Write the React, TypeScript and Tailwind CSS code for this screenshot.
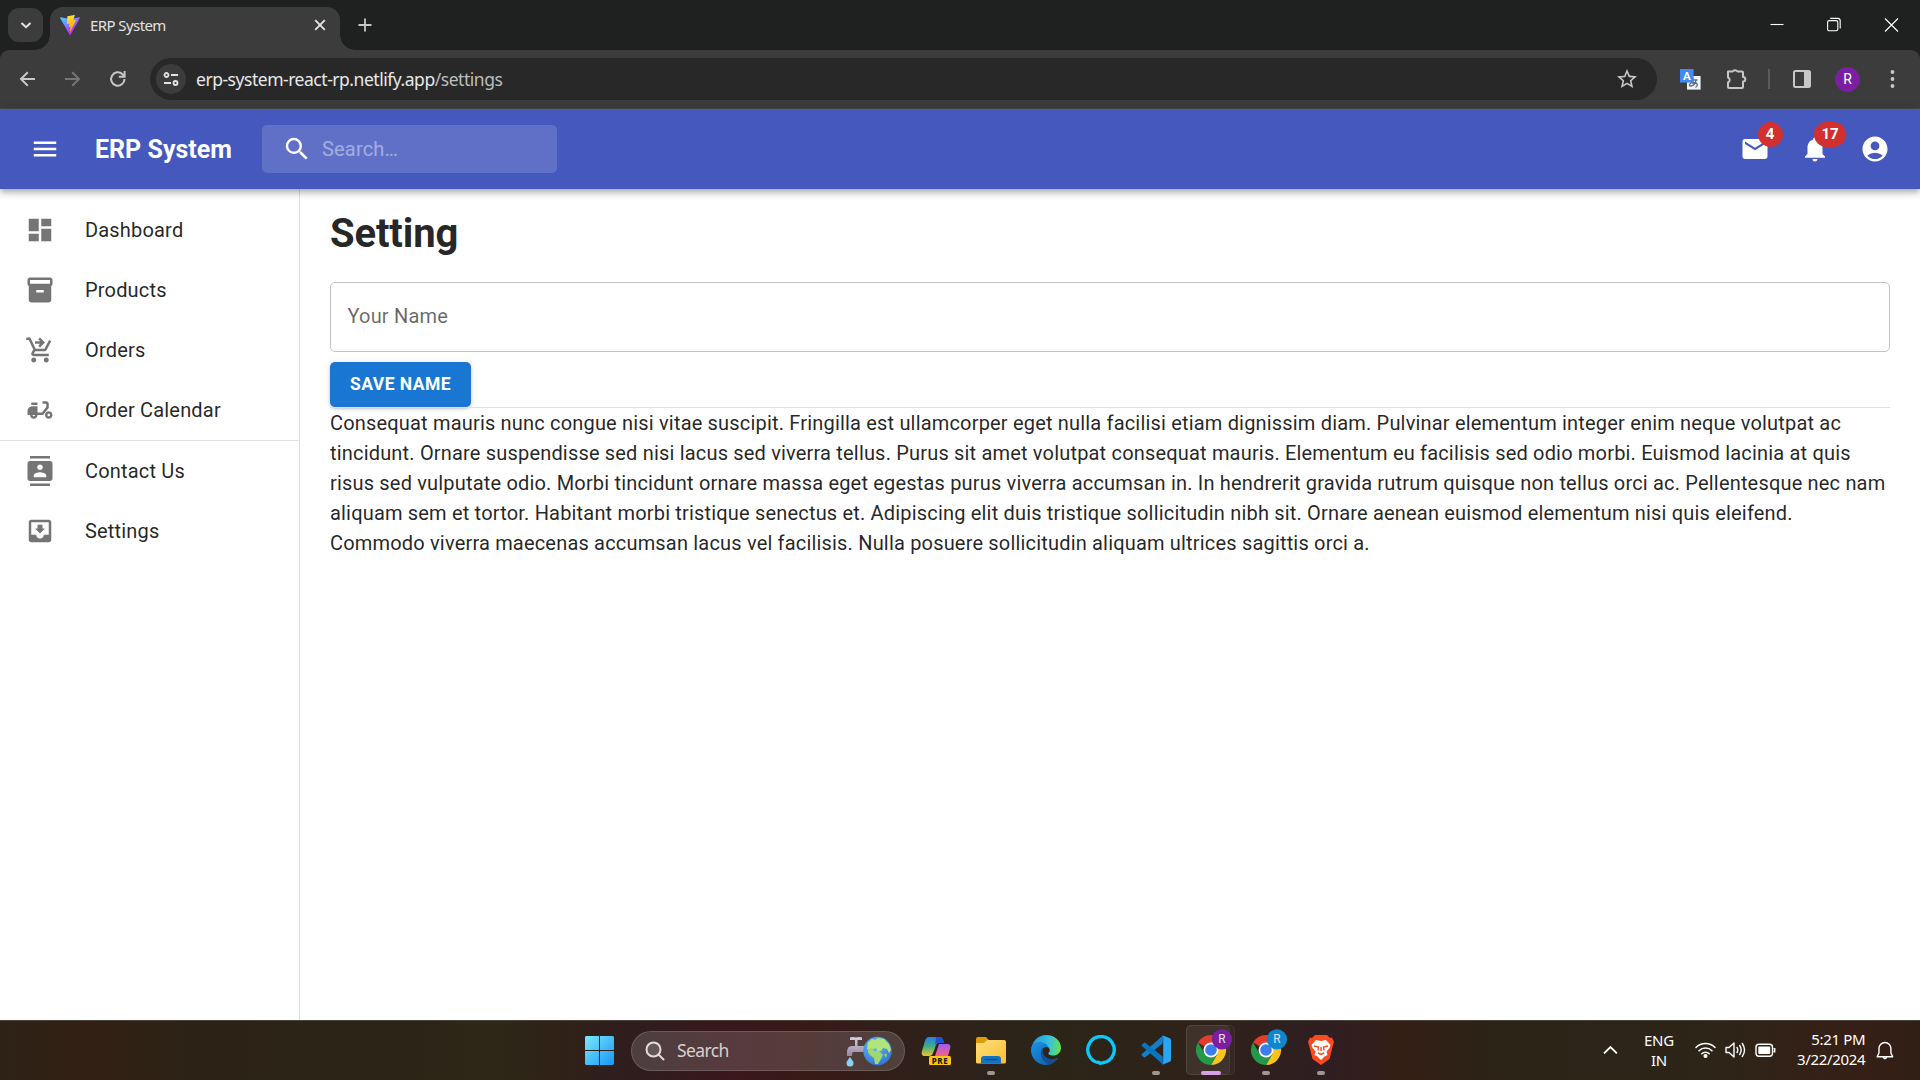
import React from "react";
import {
  MdMenu, MdSearch, MdMail, MdNotifications, MdAccountCircle, MdDashboard, MdInventory2,
  MdShoppingCartCheckout, MdDeliveryDining, MdContacts, MdMoveToInbox, MdStarBorder,
} from "react-icons/md";
import type { IconType } from "react-icons";

const SEGOE = "font-['Noto_Sans','Open_Sans',sans-serif]";

function ViteLogo() {
  return (
    <svg width="20" height="20" viewBox="0 0 256 257">
      <defs>
        <linearGradient id="va" x1="0" y1="0.08" x2="0.57" y2="0.8"><stop offset="0" stopColor="#41D1FF" /><stop offset="1" stopColor="#BD34FE" /></linearGradient>
        <linearGradient id="vb" x1="0.43" y1="0.02" x2="0.5" y2="0.9"><stop offset="0" stopColor="#FFEA83" /><stop offset="0.08" stopColor="#FFDD35" /><stop offset="1" stopColor="#FFA800" /></linearGradient>
      </defs>
      <path fill="url(#va)" d="M255.153 37.938L134.897 252.976c-2.483 4.44-8.862 4.466-11.382.048L.875 37.958c-2.746-4.814 1.371-10.646 6.827-9.67l120.385 21.517a6.537 6.537 0 0 0 2.322-.004l117.867-21.483c5.438-.991 9.574 4.796 6.877 9.62Z" />
      <path fill="url(#vb)" d="M185.432.063L96.44 17.501a3.268 3.268 0 0 0-2.634 3.014l-5.474 92.456a3.268 3.268 0 0 0 3.997 3.378l24.777-5.718c2.318-.535 4.413 1.507 3.936 3.838l-7.361 36.047c-.495 2.426 1.782 4.5 4.151 3.78l15.304-4.649c2.372-.72 4.652 1.36 4.15 3.788l-11.698 56.621c-.732 3.542 3.979 5.473 5.943 2.437l1.313-2.028l72.516-144.72c1.215-2.423-.88-5.186-3.54-4.672l-25.505 4.922c-2.396.462-4.435-1.77-3.759-4.114l16.646-57.705c.677-2.35-1.37-4.583-3.769-4.113Z" />
    </svg>
  );
}

function TabStrip() {
  return (
    <div className="flex h-[50px] bg-[#1f2120]">
      <div className="ml-2 mt-2 flex h-[34px] w-[35px] items-center justify-center rounded-[11px] bg-[#3c3c3c]">
        <svg width="12" height="12" viewBox="0 0 12 12" fill="none" stroke="#e3e3e3" strokeWidth="2"><path d="M1.500 4l4.500 4.200L10.500 4" /></svg>
      </div>
      <div className="flex w-[7px] items-end">
        <div className="-ml-[8px] h-[15px] w-[15px] shrink-0 bg-[radial-gradient(circle_at_0_0,transparent_14.5px,#3c3c3c_15px)]" />
      </div>
      <div className="mt-[7px] flex h-[43px] w-[290px] items-center rounded-t-[13px] bg-[#3c3c3c] pb-[7px] pl-[10px] pr-[13px]">
        <ViteLogo />
        <span className={`${SEGOE} ml-[10px] flex-1 text-[15px] tracking-[-0.58px] text-[#e3e3e3]`}>ERP System</span>
        <svg width="14" height="14" viewBox="0 0 14 14" stroke="#e3e3e3" strokeWidth="1.9"><path d="M2.200 2.200l9.600 9.600M11.800 2.200l-9.600 9.600" /></svg>
      </div>
      <div className="flex items-end">
        <div className="h-[15px] w-[15px] bg-[radial-gradient(circle_at_100%_0,transparent_14.5px,#3c3c3c_15px)]" />
      </div>
      <svg className="ml-[3px] mt-[18px]" width="14" height="14" viewBox="0 0 14 14" stroke="#c7c7c7" strokeWidth="1.8"><path d="M7 .5v13M.5 7h13" /></svg>
      <div className="ml-auto mt-[17px] flex gap-[43px] pr-[21px]">
        <svg width="15" height="15" viewBox="0 0 15 15" stroke="#fff" strokeWidth="1.1"><path d="M1.500 7.500h13" /></svg>
        <svg width="14" height="15" viewBox="0 0 14 15" fill="none" stroke="#fff" strokeWidth="1.1"><rect x=".6" y="3.6" width="10.2" height="10.2" rx="1.6" /><path d="M3.2 1.4h7.6a2.4 2.4 0 0 1 2.4 2.4v7.6" /></svg>
        <svg width="15" height="15" viewBox="0 0 15 15" stroke="#fff" strokeWidth="1.1"><path d="M1 1.500l13 13M14 1.500l-13 13" /></svg>
      </div>
    </div>
  );
}

function TranslateIcon() {
  return (
    <svg width="21" height="21" viewBox="0 0 21 21">
      <rect x="7" y="7" width="13.6" height="13.6" fill="#f4f4f4" />
      <path d="M9.5 11h8M13 9v6M16 11c-.5 4-3 6-5.500 6-2 0-1-3.500 2.500-3.500 5 0 5.500 3 2.500 5" fill="none" stroke="#55707c" strokeWidth="1.3" />
      <rect x="0" y="0" width="13.600" height="13.600" fill="#4688f1" />
      <text x="6.800" y="11" textAnchor="middle" fontSize="11.500" fontWeight="700" fill="#fff" className="font-['Roboto',sans-serif]">A</text>
    </svg>
  );
}

function AddressBar() {
  return (
    <div className="h-[59px] bg-[#1f2120]">
      <div className="flex h-[59px] items-center rounded-t-[9px] border-b border-[#4a4a4a] bg-[#3c3c3c]">
        <svg className="ml-[19px]" width="17" height="16" viewBox="0 0 17 16" fill="none" stroke="#c7c7c7" strokeWidth="2"><path d="M16 8H2M8.800 1.200L2 8l6.800 6.800" /></svg>
        <svg className="ml-[28px]" width="17" height="16" viewBox="0 0 17 16" fill="none" stroke="#757575" strokeWidth="2"><path d="M1 8h14M8.200 1.200L15 8l-6.800 6.800" /></svg>
        <svg className="ml-[28px]" width="18" height="18" viewBox="0 0 18 18" fill="none" stroke="#c7c7c7" strokeWidth="2"><path d="M15.500 9a6.700 6.700 0 1 1-2-4.800L15 6" /><path d="M15.600 1v5.800H9.800" /></svg>
        <div className="ml-[23px] flex h-[42px] w-[1507px] items-center rounded-full bg-[#282828] pl-[6px] pr-[18px]">
          <div className="flex h-[30px] w-[30px] items-center justify-center rounded-full bg-[#3c3c3c]">
            <svg width="16" height="16" viewBox="0 0 16 16" fill="none" stroke="#e3e3e3" strokeWidth="1.800"><circle cx="3.500" cy="4" r="2" /><path d="M8 4h7M1 12h7" /><circle cx="12.500" cy="12" r="2" /></svg>
          </div>
          <span className={`${SEGOE} ml-[10px] flex-1 whitespace-nowrap text-[17.500px] tracking-[-0.47px] text-[#e8e8e8]`}>
            erp-system-react-rp.netlify.app<span className="text-[#bdbdbd]">/settings</span>
          </span>
          <MdStarBorder className="h-[24px] w-[24px] text-[#c7c7c7]" />
        </div>
        <div className="ml-[23px]"><TranslateIcon /></div>
        <svg className="ml-[24px]" width="22" height="22" viewBox="0 0 22 22"><path d="M3 3.500h4.500a3 3 0 0 1 5 0H17q1 0 1 1v4.500a2.200 2.200 0 0 1 0 4.600V19q0 1-1 1H4q-1 0-1-1v-4.500a2.700 2.700 0 0 0 0-5z" fill="none" stroke="#c7c7c7" strokeWidth="2" strokeLinejoin="round" /></svg>
        <div className="ml-[21px] h-[20px] w-[2px] bg-[#5c5c5c]" />
        <svg className="ml-[23px]" width="18" height="18" viewBox="0 0 18 18"><rect x="1" y="1" width="16" height="16" rx="1.500" fill="none" stroke="#c7c7c7" strokeWidth="2" /><path d="M11 1h6v16h-6z" fill="#c7c7c7" /></svg>
        <div className="ml-[24px] flex h-[25px] w-[25px] items-center justify-center rounded-full bg-[#7b1fa2] font-['Roboto',sans-serif] text-[14px] text-white">R</div>
        <svg className="ml-[30px]" width="5" height="18" viewBox="0 0 5 18" fill="#c7c7c7"><circle cx="2.500" cy="2" r="1.900" /><circle cx="2.500" cy="9" r="1.900" /><circle cx="2.500" cy="16" r="1.900" /></svg>
      </div>
    </div>
  );
}

function AppBar() {
  return (
    <header className="relative z-10 flex h-[80px] shrink-0 items-center bg-[#4558be] pl-[30px] pr-[30px] text-white shadow-[0_2px_5px_-1px_rgba(0,0,0,0.2),0_5px_6px_0_rgba(0,0,0,0.14),0_1px_12px_0_rgba(0,0,0,0.12)]">
      <MdMenu className="h-[30px] w-[30px]" />
      <h1 className="ml-[35px] w-[137px] whitespace-nowrap pt-[2px] text-[25px] font-bold tracking-[0.02px]">ERP System</h1>
      <div className="ml-[30px] flex h-[48px] w-[295px] items-center rounded-[5px] bg-white/15 pl-[20px]">
        <MdSearch className="h-[30px] w-[30px]" />
        <span className="ml-[10px] text-[20px] tracking-[0.18px] text-white/42">Search…</span>
      </div>
      <div className="ml-auto flex gap-[30px]">
        <div className="relative">
          <MdMail className="h-[30px] w-[30px]" />
          <span className="absolute left-[17.500px] top-[-12px] flex h-[25px] w-[25px] items-center justify-center rounded-full bg-[#d32f2f] text-[15px] font-bold">4</span>
        </div>
        <div className="relative">
          <MdNotifications className="h-[30px] w-[30px]" />
          <span className="absolute left-[14px] top-[-12px] flex h-[25px] w-[32px] items-center justify-center rounded-full bg-[#d32f2f] text-[15px] font-bold">17</span>
        </div>
        <MdAccountCircle className="h-[30px] w-[30px]" />
      </div>
    </header>
  );
}

function NavItem({ icon: Icon, label }: { icon: IconType; label: string }) {
  return (
    <div className="flex h-[60px] items-center pl-[25px]">
      <Icon className="h-[30px] w-[30px] text-[#757575]" />
      <span className="ml-[30px] text-[20px] leading-[30px] tracking-[0.18px] text-black/87">{label}</span>
    </div>
  );
}

function Sidebar() {
  return (
    <nav className="w-[300px] shrink-0 border-r border-[#e0e0e0] pt-[11px]">
      <NavItem icon={MdDashboard} label="Dashboard" />
      <NavItem icon={MdInventory2} label="Products" />
      <NavItem icon={MdShoppingCartCheckout} label="Orders" />
      <NavItem icon={MdDeliveryDining} label="Order Calendar" />
      <div className="h-px bg-[#e0e0e0]" />
      <NavItem icon={MdContacts} label="Contact Us" />
      <NavItem icon={MdMoveToInbox} label="Settings" />
    </nav>
  );
}

const LINES = [
  "Consequat mauris nunc congue nisi vitae suscipit. Fringilla est ullamcorper eget nulla facilisi etiam dignissim diam. Pulvinar elementum integer enim neque volutpat ac",
  "tincidunt. Ornare suspendisse sed nisi lacus sed viverra tellus. Purus sit amet volutpat consequat mauris. Elementum eu facilisis sed odio morbi. Euismod lacinia at quis",
  "risus sed vulputate odio. Morbi tincidunt ornare massa eget egestas purus viverra accumsan in. In hendrerit gravida rutrum quisque non tellus orci ac. Pellentesque nec nam",
  "aliquam sem et tortor. Habitant morbi tristique senectus et. Adipiscing elit duis tristique sollicitudin nibh sit. Ornare aenean euismod elementum nisi quis eleifend.",
  "Commodo viverra maecenas accumsan lacus vel facilisis. Nulla posuere sollicitudin aliquam ultrices sagittis orci a.",
];

function SettingsPage() {
  return (
    <main className="flex-1 pl-[30px] pr-[30px] text-black/87">
      <h2 className="mt-[15px] h-[60px] text-[40px] font-bold leading-[60px] tracking-[-0.15px]">Setting</h2>
      <div className="mt-[18px] flex h-[70px] items-center rounded-[5px] border border-[#c4c4c4] pb-[2px] pl-[16.500px] text-[20px] tracking-[0.18px] text-black/60">Your Name</div>
      <button className="mt-[10px] block h-[45px] w-[141px] rounded-[5px] bg-[#1976d2] text-[17.500px] font-bold tracking-[0.44px] text-white shadow-[0_4px_1px_-3px_rgba(0,0,0,0.2),0_2px_3px_0_rgba(0,0,0,0.14),0_1px_6px_0_rgba(0,0,0,0.12)]">SAVE NAME</button>
      <div className="h-px bg-[#e0e0e0]" />
      <p className="text-[20px] leading-[30px] tracking-[0.18px]">
        {LINES.map((l) => <span key={l} className="block whitespace-nowrap">{l}</span>)}
      </p>
    </main>
  );
}

function Slot({ children, dot, active }: { children: React.ReactNode; dot?: boolean; active?: boolean }) {
  return (
    <div className="relative flex h-[60px] w-[55px] items-center justify-center">
      {active && <div className="absolute left-[3px] top-[4px] h-[50px] w-[49px] rounded-[5px] border border-white/5 bg-white/[0.03]" />}
      {active && <div className="absolute left-[3px] top-[4px] h-[50px] w-[44px] rounded-[5px] border border-white/5 bg-white/[0.05]" />}
      <div className="relative -top-px">{children}</div>
      {dot && <div className="absolute bottom-[6px] left-[23.500px] h-[4px] w-[8px] rounded-full bg-[#9f9892]" />}
      {active && <div className="absolute bottom-[6px] left-[17.500px] h-[4px] w-[20px] rounded-full bg-[#d8a0e4]" />}
    </div>
  );
}

function Chrome({ badge }: { badge: string }) {
  return (
    <svg className="block overflow-visible" width="30" height="30" viewBox="0 0 48 48">
      <path d="M24 24L3.200 12A24 24 0 0 1 44.800 12H24z" fill="#e33b2e" />
      <path d="M24 12h20.800A24 24 0 0 1 24 48l10.400-18z" fill="#fcc31e" />
      <path d="M13.600 30L3.200 12A24 24 0 0 0 24 48l10.400-18z" fill="#249a48" />
      <circle cx="24" cy="24" r="12" fill="#fff" /><circle cx="24" cy="24" r="9.300" fill="#3b7ded" />
      <circle cx="41.500" cy="7" r="16.200" fill={badge} />
      <text x="41.500" y="13.500" textAnchor="middle" fontSize="19" fill="#e8e0f0" className="font-['Roboto',sans-serif]">R</text>
    </svg>
  );
}

function Taskbar() {
  return (
    <footer className={`${SEGOE} flex h-[60px] shrink-0 items-center border-t border-[#4a443b] bg-[linear-gradient(90deg,#2e2216_0px,#332014_90px,#2c2316_190px,#2c2517_400px,#2c2717_500px,#302217_550px,#2f1d1f_640px,#3a181d_730px,#391a17_800px,#30201a_910px,#2b2518_1060px,#2f2219_1190px,#2f1e22_1330px,#351f15_1400px,#2f2116_1450px,#2b2518_1540px,#2e2418_1720px,#361f16_1860px,#301f16_1920px)] text-white`}>
      <div className="ml-[585px]">
        <svg className="block" width="29" height="29" viewBox="0 0 29 29">
          <defs><linearGradient id="win" x1="0" y1="0" x2="1" y2="1"><stop stopColor="#7be9fd" /><stop offset="1" stopColor="#1795f5" /></linearGradient></defs>
          <path fill="url(#win)" d="M1 0h13v14H0V1zM15 0h13l1 1v13H15zM0 15h14v14H1l-1-1zM15 15h14v13l-1 1H15z" />
        </svg>
      </div>
      <div className="ml-[17px] flex h-[40px] w-[276px] items-center rounded-full border border-white/15 bg-white/15 pl-[13px] pr-[12px]">
        <svg width="20" height="20" viewBox="0 0 20 20" fill="#ffffff22" stroke="#e4dcdc" strokeWidth="2"><circle cx="8.500" cy="8.500" r="7" /><path d="M13.500 13.500l5 5" strokeLinecap="round" /></svg>
        <span className="ml-[12px] flex-1 text-[17.500px] tracking-[-0.6px] text-[#d9d0d0]">Search</span>
        <svg width="46" height="32" viewBox="0 0 46 32">
          <defs>
            <linearGradient id="tap" x1="0" y1="0" x2="0" y2="1"><stop stopColor="#d9d2e2" /><stop offset="1" stopColor="#94879f" /></linearGradient>
            <radialGradient id="sea" cx=".4" cy=".3" r=".8"><stop stopColor="#6bb8f7" /><stop offset="1" stopColor="#2b6fd0" /></radialGradient>
          </defs>
          <path d="M4 2.500q3-1 6 0 3-1 6 0v2.500h-4.500v6H18v6H7.500q-1.500 0-1.500 2v2H1v-4q0-6 5-6h3V5H4z" fill="url(#tap)" />
          <path d="M4 22c2 3 3.500 4 3.500 6a3.500 3.500 0 0 1-7 0c0-2 1.500-3 3.500-6z" fill="#8bd0f5" />
          <circle cx="31.500" cy="16" r="14.300" fill="url(#sea)" />
          <path d="M22 7.500l4-3.500 3 1 3-2 6 1 5 5 2 6-2 3-2-4-4-1-2 3-4 0-1-3-3 1 1 2-4 0-3-2z" fill="#b0e57c" />
          <path d="M22 14l4-1 2 3 5 0 4 4-2 4-3 5-3 0-1-6-4-3-2-3zM38 19l3 0-1 4z" fill="#9ed873" />
        </svg>
      </div>
      <div className="ml-[3px] flex">
        <Slot>
          <svg className="block" width="30" height="30" viewBox="0 0 30 30">
            <defs>
              <linearGradient id="cp1" x1="0" y1="0" x2="0" y2="1"><stop stopColor="#2a7fe8" /><stop offset=".5" stopColor="#3fae86" /><stop offset="1" stopColor="#f0c52c" /></linearGradient>
              <linearGradient id="cp2" x1="0" y1="0" x2="0" y2="1"><stop stopColor="#a45af0" /><stop offset="1" stopColor="#f2648a" /></linearGradient>
            </defs>
            <path d="M8 2h10c3 0 4 2 5 6h-5c-2 0-3 1-4 5l-2 5c-.5 2-2 3-4 3H4c-3 0-4-2-3-5L4 6c1-3 2-4 4-4z" fill="url(#cp1)" />
            <path d="M15 2h4c2 0 3 2 4 6h-6c-1.500 0-2.500.7-3 2z" fill="#1f52d8" />
            <path d="M18 9h8c3 0 4 2 3 5l-2 7H14z" fill="url(#cp2)" />
            <rect x="8" y="21" width="22" height="9" rx="1.500" fill="#fec60d" />
            <text x="19" y="28.600" textAnchor="middle" fontSize="8" fontWeight="800" fill="#1d1a10" letterSpacing=".5">PRE</text>
          </svg>
        </Slot>
        <Slot dot>
          <svg className="block" width="30" height="30" viewBox="0 0 30 30">
            <defs><linearGradient id="fo" x1="0" y1="0" x2="1" y2="1"><stop stopColor="#ffdf7c" /><stop offset="1" stopColor="#fcbf2c" /></linearGradient></defs>
            <path d="M0 4q0-2 2-2h8l3 3h-2L9 9H0z" fill="#dd9c09" />
            <path d="M0 8h8l3-3h17q2 0 2 2v20q0 1.500-2 1.500H2q-2 0-2-1.500z" fill="url(#fo)" />
            <path d="M5 28.500V24q0-3 3-3h14q3 0 3 3v4.500z" fill="#1173c6" /><path d="M9 24.500h12" stroke="#0a4c8f" strokeWidth="1.300" strokeLinecap="round" />
          </svg>
        </Slot>
        <Slot>
          <svg className="block" width="30" height="30" viewBox="0 0 30 30">
            <defs>
              <linearGradient id="e1" x1="0" y1=".3" x2="1" y2=".4"><stop stopColor="#2796de" /><stop offset=".6" stopColor="#35c1e0" /><stop offset="1" stopColor="#66e04c" /></linearGradient>
              <linearGradient id="e2" x1="0" y1="0" x2="1" y2="1"><stop stopColor="#1a93e4" /><stop offset="1" stopColor="#0c59a4" /></linearGradient>
            </defs>
            <path d="M.5 13C2 5 8 0 15 0c9 0 15 6 15 13 0 5-4 7.500-8 7.500-3 0-5.500-1.500-4.500-2.500 3-3 .5-7-4-7C7 11 2 16 .5 13z" fill="url(#e1)" />
            <path d="M0 15c0-5 3.500-8 8-8 5 0 9 2.500 9.500 6-1-1.500-6-2-6.500 3-.5 6 6 9 12 8l4-1c-3 4-7 7-12 7C6 30 0 23 0 15z" fill="url(#e2)" />
            <path d="M12 12.500c-5 5-1.500 15 7 16.800 3-1 6-3.300 8-6.300-7 3.500-16-1-15-7.500z" fill="#124f96" />
          </svg>
        </Slot>
        <Slot>
          <svg className="block" width="30" height="30" viewBox="0 0 30 30"><path d="M13 27.800A13.200 13.200 0 1 1 17 27.800" fill="none" stroke="#0cc9fb" strokeWidth="3.400" /><path d="M12.200 25.500L13.200 30Q18 30 20 27L17 26q-2 1-4-.5z" fill="#0cc9fb" /></svg>
        </Slot>
        <Slot dot>
          <svg className="block" width="30" height="30" viewBox="0 0 100 100">
            <path d="M72 28L14 74q-2 1.500-4 0L3 68q-3-2.500 0-5L74 1z" fill="#1180c8" />
            <path d="M72 72L14 26q-2-1.500-4 0L3 32q-3 2.500 0 5L74 99z" fill="#0a75bd" />
            <path d="M71 .500L96 11q4 2 4 6v66q0 4-4 6L71 99.500q3-2 3-6V6.500q0-4-3-6z" fill="#2aa5f2" />
          </svg>
        </Slot>
        <Slot active><Chrome badge="#7b1fa2" /></Slot>
        <Slot dot><Chrome badge="#0c88ce" /></Slot>
        <Slot dot>
          <svg className="block" width="26" height="30" viewBox="0 0 26 30">
            <path d="M7 0h12l3 3 2-.5L26 7l-1 3-3.500 14L13 30 4.500 24 1 10 0 7l2-4.500L4 3z" fill="#fb4a1e" />
            <path d="M8 5l5 1 5-1 4.500 5-1 3-3 3.500 1 3.500-3 1.500-3.500 3.500-3.500-3.500-3-1.500 1-3.500-3-3.500-1-3z" fill="#fff" />
            <path d="M6 11l4.500 1-.5 3.500M20 11l-4.500 1 .5 3.500M10 18l3 1.500 3-1.500M13 12v4" fill="none" stroke="#fb4a1e" strokeWidth="1.400" />
          </svg>
        </Slot>
      </div>
      <svg className="ml-[255px]" width="15" height="15" viewBox="0 0 15 15" fill="none" stroke="#fff" strokeWidth="1.800"><path d="M1 10.500l6.500-6.500L14 10.500" /></svg>
      <div className="ml-[20px] w-[42px] pb-[2px] text-center text-[15px] leading-[20px] tracking-[-0.3px]">ENG<br />IN</div>
      <div className="ml-[15px] flex items-center gap-[9px] pb-[1px]">
        <svg width="21" height="20" viewBox="0 0 21 20" fill="none" stroke="#fff" strokeWidth="1.500" strokeLinecap="round"><path d="M1 7.500a13.500 13.500 0 0 1 19 0M4 10.700a9.300 9.300 0 0 1 13 0M6.800 13.700a5.300 5.300 0 0 1 7.400 0" /><circle cx="10.500" cy="16" r="1.300" fill="#fff" /></svg>
        <svg width="21" height="20" viewBox="0 0 21 20" fill="none" stroke="#fff" strokeWidth="1.400" strokeLinecap="round" strokeLinejoin="round"><path d="M1 7.500h3l5-4.500v14l-5-4.500H1zM12 7.500q1.600 2.500 0 5M14.700 5.500q3 4.500 0 9M17.300 3.500q4.500 6.500 0 13" /></svg>
        <svg width="21" height="20" viewBox="0 0 21 20" fill="none" stroke="#fff" strokeWidth="1.400"><rect x="1" y="4.200" width="16.500" height="12" rx="3" /><rect x="3.300" y="6.500" width="11.900" height="7.400" rx="1" fill="#fff" stroke="none" /><path d="M18.500 8.700h1.200v3h-1.200" /></svg>
      </div>
      <div className="ml-auto w-[90px] whitespace-nowrap pb-[4px] text-right text-[15px] leading-[20px] tracking-[-0.35px]">5:21 PM<br />3/22/2024</div>
      <svg className="ml-[10px] mr-[25px]" width="20" height="20" viewBox="0 0 20 20" fill="none" stroke="#fff" strokeWidth="1.400" strokeLinejoin="round"><path d="M10 1.500a6 6 0 0 0-6 6V12l-1.800 3.800h15.600L16 12V7.500a6 6 0 0 0-6-6zM8 16q2 3.500 4 0" /></svg>
    </footer>
  );
}

export default function App() {
  return (
    <div className="flex h-[1080px] w-[1920px] flex-col overflow-hidden bg-white font-['Roboto',sans-serif]">
      <TabStrip />
      <AddressBar />
      <AppBar />
      <div className="flex flex-1">
        <Sidebar />
        <SettingsPage />
      </div>
      <Taskbar />
    </div>
  );
}
